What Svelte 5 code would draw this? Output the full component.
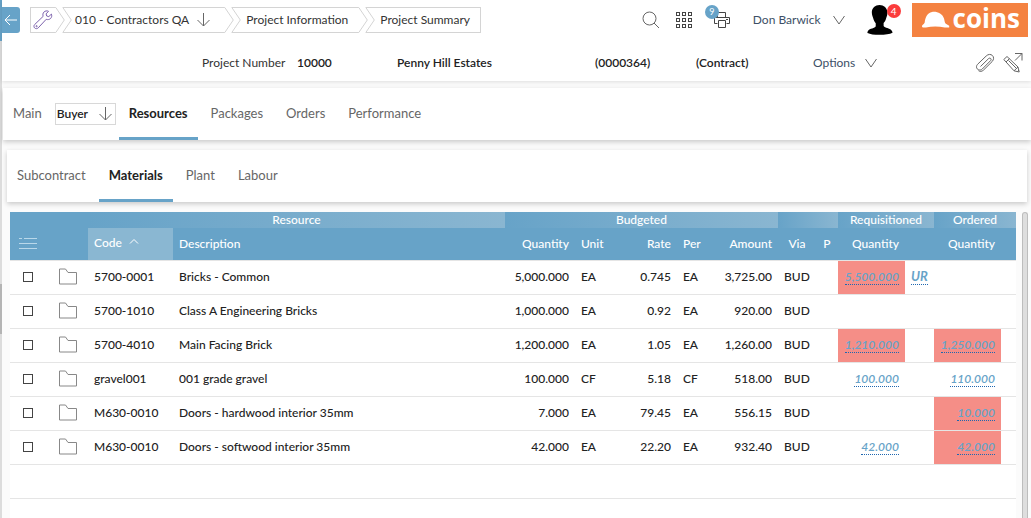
<script>
  const tabs = ['Resources', 'Packages', 'Orders', 'Performance'];
  const subTabs = ['Subcontract', 'Materials', 'Plant', 'Labour'];
  const rows = [
    { code: '5700-0001', desc: 'Bricks - Common', qty: '5,000.000', unit: 'EA', rate: '0.745', per: 'EA', amount: '3,725.00', req: '5,500.000', reqAlert: true, flag: 'UR' },
    { code: '5700-1010', desc: 'Class A Engineering Bricks', qty: '1,000.000', unit: 'EA', rate: '0.92', per: 'EA', amount: '920.00' },
    { code: '5700-4010', desc: 'Main Facing Brick', qty: '1,200.000', unit: 'EA', rate: '1.05', per: 'EA', amount: '1,260.00', req: '1,210.000', reqAlert: true, ord: '1,250.000', ordAlert: true },
    { code: 'gravel001', desc: '001 grade gravel', qty: '100.000', unit: 'CF', rate: '5.18', per: 'CF', amount: '518.00', req: '100.000', ord: '110.000' },
    { code: 'M630-0010', desc: 'Doors - hardwood interior 35mm', qty: '7.000', unit: 'EA', rate: '79.45', per: 'EA', amount: '556.15', ord: '10.000', ordAlert: true },
    { code: 'M630-0010', desc: 'Doors - softwood interior 35mm', qty: '42.000', unit: 'EA', rate: '22.20', per: 'EA', amount: '932.40', req: '42.000', ord: '42.000', ordAlert: true }
  ];
  const gridDots = [1, 7, 13];
</script>

{#snippet notch()}
  <svg class="cap" width="10" height="26" viewBox="0 0 10 26" aria-hidden="true"><path d="M10 .5H.8L9.3 13 .8 25.5H10" /></svg>
{/snippet}
{#snippet point()}
  <svg class="cap" width="10" height="26" viewBox="0 0 10 26" aria-hidden="true"><path d="M0 .5H.8L9.3 13 .8 25.5H0" /></svg>
{/snippet}
{#snippet downArrow()}
  <svg class="line" width="14" height="14" viewBox="0 0 14 14" aria-hidden="true"><path d="M7.500 0V13M1.500 7l6 6 6-6" /></svg>
{/snippet}
{#snippet chevron()}
  <svg class="line" width="12" height="10" viewBox="0 0 12 10" aria-hidden="true"><path d="M.5 1 6 9l5.500-8" /></svg>
{/snippet}

<div class="page">
  <div class="rail"><span class="rail-top"></span><span class="rail-grip"></span></div>
  <div class="main">
    <header>
      <div class="topbar">
        <button class="back" aria-label="Back">
          <svg width="14" height="12" viewBox="0 0 14 12" aria-hidden="true"><path d="M13 6H1M6 1 1 6l5 5" /></svg>
        </button>
        <nav class="crumbs" aria-label="Breadcrumb">
          <a class="crumb" href="#tools" aria-label="Tools">
            <span class="mid first">
              <svg width="20" height="20" viewBox="0 0 20 20" aria-hidden="true"><path class="wrench" d="M15.500 1.300c-1.500-.8-3.500-.4-4.600.8-1.100 1.200-1.300 2.800-.7 4.200L1.700 14.500c-1 1-1 2.600 0 3.500.9.900 2.500.9 3.500-.1l8-8.600c1.600.6 3.300.3 4.500-.9 1.100-1.200 1.300-2.900.7-4.300l-2.600 2.500-2.100-.6-.6-2.100z" /><circle class="wrench" cx="3.600" cy="16.200" r=".6" /></svg>
            </span>
            {@render point()}
          </a>
          <button class="crumb" aria-haspopup="true">
            {@render notch()}<span class="mid company">010 - Contractors QA {@render downArrow()}</span>{@render point()}
          </button>
          <a class="crumb" href="#information">{@render notch()}<span class="mid info">Project Information</span>{@render point()}</a>
          <a class="crumb" href="#summary">{@render notch()}<span class="mid last">Project Summary</span></a>
        </nav>
        <div class="tools">
          <button aria-label="Search">
            <svg class="line" width="18" height="18" viewBox="0 0 18 18" aria-hidden="true"><circle cx="7.500" cy="7.500" r="6.500" /><path d="m12 12 5 5" /></svg>
          </button>
          <button aria-label="Applications">
            <svg class="dark" width="18" height="18" viewBox="0 0 18 18" aria-hidden="true">
              {#each gridDots as y}{#each gridDots as x}<rect x={x + 0.5} y={y + 0.5} width="3" height="3" />{/each}{/each}
            </svg>
          </button>
          <button class="print" aria-label="Print queue">
            <svg class="dark" width="18" height="18" viewBox="0 0 18 18" aria-hidden="true"><path d="M4.500 6.500v-5h8v5M4.500 12.500h-3v-6h15v6h-3M5.500 9.500h7v7h-7zM13 8.500h2" /></svg>
            <span class="badge blue">9</span>
          </button>
          <button class="user">Don Barwick {@render chevron()}</button>
          <button class="avatar" aria-label="Notifications">
            <svg width="26" height="30" viewBox="0 0 28 30" preserveAspectRatio="none" aria-hidden="true"><path d="M13.500 0C9 0 5 3 5.200 7.500c.1 2.500.8 3.700 1.400 5.500.5 2.300 1.700 4 2.800 5.200v3C8.500 23.500 3 23 1 26c-.6.9-.6 1.700-.5 2 3 1.300 7 1.800 13 1.800s11-.6 14-2c0-.8-.3-1.600-1-2.400-2.300-2.500-7-2-8.600-4.300v-3c1.200-1.200 2.300-2.800 2.800-5 .7-1.800 1.300-3 1.300-5.500C22 3 18 0 13.500 0z" /></svg>
            <span class="badge red">4</span>
          </button>
          <a class="logo" href="#home">
            <svg width="29" height="18" viewBox="0 0 29 18" aria-hidden="true"><path d="M1 15c0-1.200 2-1.600 2.700-3.500C4.300 6 6.500 1.700 11 1c5-.8 10.500 1.800 12 6.500.6 2 .6 4.200 1.800 5.300l3.400 1.900v1.800h-4.500c-6-1.300-13-1.300-18.700 0H2c-.8 0-1-.8-1-1.500z" /></svg>
            <span>coins</span>
          </a>
        </div>
      </div>
      <div class="context">
        <span>Project Number</span>
        <b>10000</b>
        <b>Penny Hill Estates</b>
        <b>(0000364)</b>
        <b>(Contract)</b>
        <button class="options">Options {@render chevron()}</button>
        <div class="actions">
          <button aria-label="Attachments">
            <svg class="line" width="20" height="20" viewBox="0 0 20 20" aria-hidden="true"><path d="m5.500 13.500 8.200-8c1.400-1.300 3.300.6 2 2L7.300 16c-2.200 2-5.500.8-5.800-1.800-.1-1.300.4-2.200 1.200-3l8.500-8.200c2-2 4.600-2 6.200-.5s1.600 4-.2 6l-8.700 8.600c-1.700 1.600-3.700 1.600-5 .6" /></svg>
          </button>
          <button aria-label="Edit">
            <svg class="line" width="20" height="20" viewBox="0 0 20 20" aria-hidden="true"><path d="M12 .5h7v7M19 .5l-7 7M.8 6.500 4 3.500l11 10.500 1.200 5-5.200-1.200zM3 9l3.500-3.500M5.500 7.500l8 8M11 17.800l4-3.800M14.500 18.500l1.500-1.500" /></svg>
          </button>
        </div>
      </div>
    </header>

    <nav class="tabs" aria-label="Project sections">
      <a href="#main">Main</a>
      <label class="picker">
        <select aria-label="Role"><option>Buyer</option></select>
        {@render downArrow()}
      </label>
      {#each tabs as tab, i}<a href="#{tab}" class:active={i === 0}>{tab}</a>{/each}
    </nav>

    <nav class="tabs sub" aria-label="Resource types">
      {#each subTabs as tab, i}<a href="#{tab}" class:active={i === 1}>{tab}</a>{/each}
    </nav>

    <div class="content">
      <table>
        <colgroup>
          <col class="c-check" /><col class="c-folder" /><col class="c-code" /><col />
          <col class="c-qty" /><col class="c-unit" /><col class="c-rate" /><col class="c-per" /><col class="c-amount" />
          <col class="c-via" /><col class="c-p" />
          <col class="c-link" /><col class="c-flag" /><col class="c-link" /><col class="c-end" />
        </colgroup>
        <thead>
          <tr class="groups">
            <td colspan="2"></td>
            <th colspan="2" class="group">Resource</th>
            <th colspan="5" class="group">Budgeted</th>
            <td colspan="2" class="group"></td>
            <th colspan="2" class="group">Requisitioned</th>
            <th colspan="2" class="group">Ordered</th>
          </tr>
          <tr class="heads">
            <th class="center">
              <button aria-label="List options">
                <svg width="18" height="14" viewBox="0 0 18 14" aria-hidden="true"><path d="M0 1.500h3M5 1.500h13M0 6.500h18M0 11.500h18" /></svg>
              </button>
            </th>
            <td></td>
            <th class="sorted" aria-sort="ascending">Code
              <svg width="10" height="6" viewBox="0 0 10 6" aria-hidden="true"><path d="M1 5.500l4-4 4 4" /></svg>
            </th>
            <th>Description</th>
            <th class="num">Quantity</th>
            <th>Unit</th>
            <th class="num">Rate</th>
            <th>Per</th>
            <th class="num">Amount</th>
            <th class="center">Via</th>
            <th class="center">P</th>
            <th class="num">Quantity</th>
            <td></td>
            <th class="num">Quantity</th>
            <td></td>
          </tr>
        </thead>
        <tbody>
          {#each rows as r}
            <tr>
              <td class="center"><input type="checkbox" aria-label="Select {r.desc}" /></td>
              <td class="center folder-cell">
                <svg class="folder" width="18" height="17" viewBox="0 0 18 17" aria-hidden="true"><path d="M.5 1v15h17V4.500H9L6.500 1z" /></svg>
              </td>
              <td>{r.code}</td>
              <td>{r.desc}</td>
              <td class="num">{r.qty}</td>
              <td>{r.unit}</td>
              <td class="num">{r.rate}</td>
              <td>{r.per}</td>
              <td class="num">{r.amount}</td>
              <td>BUD</td>
              <td></td>
              <td class="num" class:alert={r.reqAlert}>{#if r.req}<a href="#requisitioned">{r.req}</a>{/if}</td>
              <td>{#if r.flag}<a class="flag" href="#flag">{r.flag}</a>{/if}</td>
              <td class="num" class:alert={r.ordAlert}>{#if r.ord}<a href="#ordered">{r.ord}</a>{/if}</td>
              <td></td>
            </tr>
          {/each}
          <tr><td colspan="15"></td></tr>
          <tr><td colspan="15"></td></tr>
        </tbody>
      </table>
      <div class="scroll"></div>
    </div>
  </div>
</div>

<style>
  :global(body) { margin: 0; overflow: hidden; background: #fbfbfb; }
  .page, .page * { box-sizing: border-box; }
  .page {
    display: flex;
    height: 100vh;
    overflow: hidden;
    font: 12px/16px Lato, sans-serif;
    color: #333;
  }
  a { color: inherit; text-decoration: none; }
  button {
    display: flex;
    align-items: center;
    padding: 0;
    border: 0;
    background: none;
    color: inherit;
    font: inherit;
    cursor: pointer;
  }
  svg { display: block; fill: none; }
  .line { stroke: #666; }
  .dark { stroke: #444; }

  .rail { display: flex; flex: none; flex-direction: column; width: 2px; background: #dcdcdc; }
  .rail-top { height: 41px; margin-bottom: 243px; background: #67a3c8; }
  .rail-grip { height: 50px; background: #b4b4b4; }
  .main { display: flex; flex: 1; flex-direction: column; min-width: 0; }

  header { flex: none; height: 81px; background: #fff; box-shadow: 0 1px 4px rgba(0, 0, 0, 0.12); }
  .topbar { display: flex; align-items: center; height: 40px; padding-right: 3px; }
  .back {
    justify-content: center;
    width: 18px;
    height: 26px;
    margin-right: 10px;
    border-radius: 0 3px 3px 0;
    background: #67a3c8;
  }
  .back svg { stroke: #fff; }
  .crumbs { display: flex; }
  .crumb { display: flex; align-items: stretch; }
  .crumb + .crumb { margin-left: -3px; }
  .cap { flex: none; stroke: #d4d4d4; }
  .mid {
    display: flex;
    align-items: center;
    height: 26px;
    border: solid #d4d4d4;
    border-width: 1px 0;
    white-space: nowrap;
  }
  .first { padding: 0 2px; border-left-width: 1px; }
  .wrench { stroke: #7d62ad; }
  .company { gap: 7px; padding: 0 14px 0 3px; }
  .info { padding: 0 10px 0 5px; }
  .last { padding: 0 10px 0 5px; border-right-width: 1px; }

  .tools { display: flex; align-items: center; margin-left: auto; }
  .tools > :nth-child(2) { margin-left: 15px; }
  .print { position: relative; margin-left: 20px; }
  .badge {
    position: absolute;
    border-radius: 50%;
    color: #fff;
    text-align: center;
    font-size: 9px;
    width: 14px;
    height: 14px;
    line-height: 14px;
  }
  .blue { top: -6px; left: -8px; background: #67a3c8; }
  .red { top: -1px; right: -8px; background: #fb3c3c; font-size: 10px; }
  .user { gap: 12px; margin-left: 22px; color: #3d4f66; }
  .avatar { position: relative; margin-left: 22px; }
  .avatar path { fill: #000; }
  .logo {
    display: flex;
    align-items: center;
    gap: 3px;
    height: 34px;
    margin-left: 19px;
    padding: 0 8px 0 9px;
    background: #f48241;
    color: #fff;
    font: 700 26px/30px "Open Sans", sans-serif;
  }
  .logo path { fill: #fff; }
  .logo span { padding-bottom: 4px; }

  .context {
    display: grid;
    grid-template-columns: 95px 100px 198px 101px 117px 1fr auto;
    align-items: center;
    padding: 13px 8px 0 200px;
  }
  .context b { color: #222; font-weight: 600; }
  .options { gap: 10px; color: #3d4f66; }
  .actions { display: flex; gap: 8px; }

  .tabs {
    display: flex;
    flex: none;
    align-items: center;
    gap: 3px;
    height: 52px;
    margin: 7px 0 0 1px;
    background: #fff;
    box-shadow: 0 2px 5px rgba(0, 0, 0, 0.2);
    font-size: 13px;
  }
  .tabs.sub { margin: 10px 4px 0 5px; }
  .tabs a { height: 52px; padding: 0 10px; border-bottom: 3px solid transparent; color: #666; line-height: 50px; }
  .tabs a.active { border-color: #67a3c8; color: #222; font-weight: 700; }
  .picker { position: relative; display: block; }
  .picker select {
    display: block;
    width: 61px;
    height: 22px;
    padding: 0 0 0 1px;
    border: 1px solid #d8d8d8;
    border-radius: 0;
    appearance: none;
    background: #fff;
    color: #222;
    font: 600 12px/16px Lato, sans-serif;
  }
  .picker svg { position: absolute; top: 4px; right: 4px; pointer-events: none; }

  .content { display: flex; flex: 1; min-height: 0; padding: 10px 3px 0 8px; align-items: flex-start; }
  table { flex: 1; width: 100%; min-width: 0; border-spacing: 0; table-layout: fixed; background: #fff; color: #222; font-weight: 500; }
  .c-check { width: 36px; }
  .c-folder { width: 42px; }
  .c-code { width: 85px; }
  .c-qty { width: 70px; }
  .c-unit { width: 40px; }
  .c-rate { width: 62px; }
  .c-per { width: 36px; }
  .c-amount { width: 65px; }
  .c-via { width: 38px; }
  .c-p { width: 22px; }
  .c-link { width: 67px; }
  .c-flag { width: 29px; }
  .c-end { width: 15px; }
  th, td { padding: 0 6px; text-align: left; white-space: nowrap; }
  thead { background: #67a3c8; color: #fff; }
  th { font-weight: 500; }
  .groups > * { height: 16px; line-height: 16px; text-align: center; }
  .group { background: linear-gradient(to right, #67a3c8, #8ab6d1); }
  .heads > * { height: 32px; }
  th.sorted { padding-bottom: 2px; background: #8ab7d2; }
  .sorted svg { display: inline-block; margin: 0 0 3px 4px; stroke: #fff; }
  .heads button svg { stroke: #b9d8ea; }
  tbody td { height: 34px; padding-bottom: 2px; border-top: 1px solid #e5e5e5; }
  .num { text-align: right; }
  .center { padding-left: 0; padding-right: 0; text-align: center; }
  .folder-cell { padding-left: 2px; }
  .center svg, .center input, .center button { margin: 0 auto; }
  input {
    display: block;
    width: 10px;
    height: 10px;
    border: 1px solid #444;
    appearance: none;
    background: #fff;
  }
  .folder { stroke: #888; }
  .alert { background: #f58e87; background-clip: padding-box; }
  td a { border-bottom: 1px dotted #1f67b0; color: #67a3c8; font-style: italic; font-weight: 600; }
  td a.flag { font-weight: 700; font-size: 13px; }
  .scroll {
    flex: none;
    align-self: stretch;
    width: 6px;
    margin-left: 6px;
    border: solid #bdbdbd;
    border-width: 1px 1px 0;
    border-radius: 3px 3px 0 0;
    background: #dedede;
  }
</style>
